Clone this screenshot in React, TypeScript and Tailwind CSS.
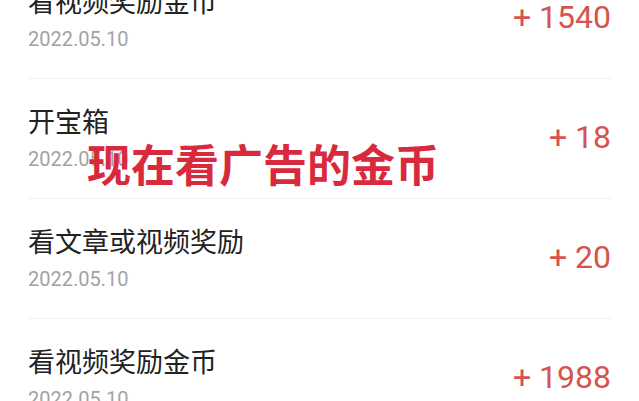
import React from "react";

const rows = [
  { title: "看视频奖励金币", date: "2022.05.10", amount: "+ 1540" },
  { title: "开宝箱", date: "2022.05.10", amount: "+ 18" },
  { title: "看文章或视频奖励", date: "2022.05.10", amount: "+ 20" },
  { title: "看视频奖励金币", date: "2022.05.10", amount: "+ 1988" },
];

export default function App() {
  return (
    <div
      className="relative w-[639px] h-[401px] overflow-hidden bg-white"
      style={{ fontFamily: 'Roboto, "Noto Sans CJK SC", sans-serif' }}
    >
      <div className="mt-[-41px] px-[28px]">
        {rows.map((r, i) => (
          <div
            key={i}
            className="h-[120px] flex items-center justify-between border-b border-[#f0f0f0]"
          >
            <div className="flex flex-col">
              <div className="text-[27px] leading-[34px] text-[#222222]">{r.title}</div>
              <div className="mt-[6px] text-[20px] leading-[26px] text-[#a3a3a3]">{r.date}</div>
            </div>
            <div className="text-[32px] leading-[38px] text-[#d6534e] mb-[4px]">{r.amount}</div>
          </div>
        ))}
      </div>
      <div
        className="absolute left-[87px] top-[135px] text-[44px] leading-[56px] font-bold text-[#d8293d]"
        style={{ fontFamily: '"Noto Sans CJK SC", sans-serif' }}
      >
        现在看广告的金币
      </div>
    </div>
  );
}
